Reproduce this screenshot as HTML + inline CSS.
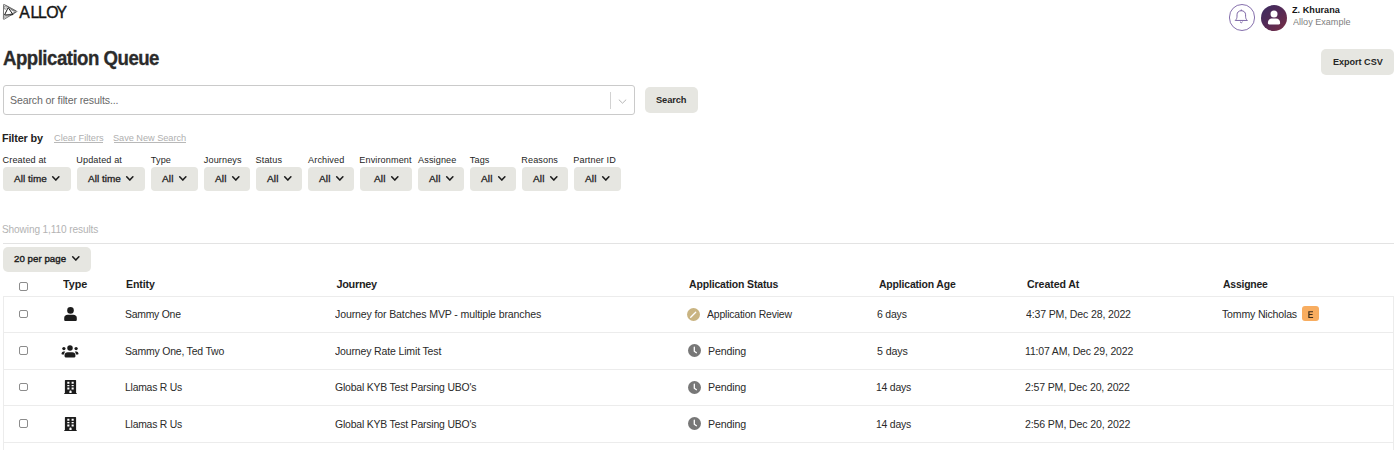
<!DOCTYPE html>
<html><head><meta charset="utf-8">
<style>
html,body{margin:0;padding:0;background:#fff;width:1400px;height:450px;overflow:hidden;}
body{position:relative;font-family:"Liberation Sans",sans-serif;color:#222;}
.a{position:absolute;}
.t{position:absolute;white-space:nowrap;line-height:1;}
.btn{position:absolute;background:#e6e6e1;border-radius:4px;}
.hl{position:absolute;background:#ececec;height:1px;}
.cb{position:absolute;width:7px;height:6.8px;border:1px solid #8c8c8c;border-radius:2px;background:#fff;}
</style></head>
<body>
<svg class="a" style="left:0px;top:0px" width="20" height="22" viewBox="0 0 20 22" fill="none" stroke="#1a1a1a" stroke-linejoin="round">
<path d="M3.6 4.9 Q3.4 4.2 4.2 4.5 L16.6 11.1 Q17.3 11.5 16.6 11.9 L4.2 19.2 Q3.4 19.6 3.4 18.8 Z" stroke-width="0.7" stroke="#3a3a3a"/>
<path d="M4.5 15 L8.2 7.6 L13 14.6 Z" stroke-width="1.0"/>
<path d="M6 5.6 L15.6 11.2 M8.4 7.2 L14.8 12 M10.5 9.5 L16 11.5" stroke-width="0.45" stroke="#444"/>
<path d="M3.8 16.5 L15.2 12.3 M3.8 18 L15.8 12" stroke-width="0.45" stroke="#444"/>
<ellipse cx="5.2" cy="7.6" rx="1.0" ry="1.8" stroke-width="0.55" stroke="#444"/>
</svg><div class="a" style="left:1228.8px;top:4.2px;width:24.4px;height:24.4px;border:1px solid #8670ad;border-radius:50%;"></div>
<svg class="a" style="left:1226px;top:1.4px" width="32" height="32" viewBox="0 0 32 32" fill="none" stroke="#7d66a6" stroke-width="1" stroke-linejoin="round" stroke-linecap="round">
<path d="M9.5 19.2 C10.6 18.3 11 17 11 15.2 V13.8 C11 11.3 12.8 9.7 15.3 9.7 C17.8 9.7 19.6 11.3 19.6 13.8 V15.2 C19.6 17 20 18.3 21.1 19.2 Z"/>
<path d="M15.3 9.7 V8.9"/><path d="M14.3 21 L15.3 21.8 L16.3 21"/>
</svg><div class="a" style="left:1261px;top:4.6px;width:26px;height:26px;border-radius:50%;background:linear-gradient(135deg,#3a2c62 0%,#552a55 50%,#7a2e44 100%);"></div>
<svg class="a" style="left:1261px;top:4.6px" width="26" height="26" viewBox="0 0 26 26" fill="#fff">
<circle cx="13" cy="8.9" r="3.5"/><path d="M6.9 17.7 C6.9 15.2 8.4 13.5 11 13.5 H15 C17.6 13.5 19.1 15.2 19.1 17.7 V18.3 C19.1 19 18.6 19.5 17.9 19.5 H8.1 C7.4 19.5 6.9 19 6.9 18.3 Z"/>
</svg><div class="a" style="left:3px;top:85.3px;width:629.5px;height:27.5px;border:1px solid #cacaca;border-radius:3px;background:#fff;"></div>
<div class="a" style="left:609.5px;top:91.6px;width:1px;height:17.3px;background:#d2d2d2;"></div>
<svg class="a" style="left:617.5px;top:98.5px" width="9" height="5" viewBox="0 0 9 5" fill="none" stroke="#b5b5b5" stroke-width="1"><path d="M0.8 0.6 L4.5 4.2 L8.2 0.6"/></svg>
<div class="btn" style="left:645px;top:87.1px;width:53px;height:25.8px;border-radius:5px;"></div>
<div class="btn" style="left:1321px;top:49px;width:73px;height:26px;border-radius:5px;"></div>
<div class="a" style="left:3px;top:142.3px;width:0;height:0;"></div>
<div class="a" style="left:54.3px;top:142.2px;width:48.8px;height:0.8px;background:#b8b8b8;"></div>
<div class="a" style="left:113.9px;top:142.2px;width:72.1px;height:0.8px;background:#b8b8b8;"></div>
<div class="hl" style="left:3px;top:243px;width:1391px;background:#e3e3e3;"></div>
<div class="btn" style="left:2.8px;top:246.6px;width:88.1px;height:25.3px;border-radius:5px;"></div>
<div class="btn" style="left:3px;top:167px;width:68px;height:23.5px;"></div>
<svg class="a" style="left:52.00px;top:176.20px" width="7.6" height="4.8" viewBox="0 0 7.6 4.8" fill="none" stroke="#1c1c1c" stroke-width="1.55" stroke-linecap="round" stroke-linejoin="round" overflow="visible"><path d="M0.7 0.7 L3.8 4.1 L6.8999999999999995 0.7"/></svg>
<div class="btn" style="left:77px;top:167px;width:68px;height:23.5px;"></div>
<svg class="a" style="left:126.00px;top:176.20px" width="7.6" height="4.8" viewBox="0 0 7.6 4.8" fill="none" stroke="#1c1c1c" stroke-width="1.55" stroke-linecap="round" stroke-linejoin="round" overflow="visible"><path d="M0.7 0.7 L3.8 4.1 L6.8999999999999995 0.7"/></svg>
<div class="btn" style="left:151px;top:167px;width:47px;height:23.5px;"></div>
<svg class="a" style="left:179.30px;top:176.20px" width="7.6" height="4.8" viewBox="0 0 7.6 4.8" fill="none" stroke="#1c1c1c" stroke-width="1.55" stroke-linecap="round" stroke-linejoin="round" overflow="visible"><path d="M0.7 0.7 L3.8 4.1 L6.8999999999999995 0.7"/></svg>
<div class="btn" style="left:204px;top:167px;width:46px;height:23.5px;"></div>
<svg class="a" style="left:231.80px;top:176.20px" width="7.6" height="4.8" viewBox="0 0 7.6 4.8" fill="none" stroke="#1c1c1c" stroke-width="1.55" stroke-linecap="round" stroke-linejoin="round" overflow="visible"><path d="M0.7 0.7 L3.8 4.1 L6.8999999999999995 0.7"/></svg>
<div class="btn" style="left:256px;top:167px;width:46px;height:23.5px;"></div>
<svg class="a" style="left:283.80px;top:176.20px" width="7.6" height="4.8" viewBox="0 0 7.6 4.8" fill="none" stroke="#1c1c1c" stroke-width="1.55" stroke-linecap="round" stroke-linejoin="round" overflow="visible"><path d="M0.7 0.7 L3.8 4.1 L6.8999999999999995 0.7"/></svg>
<div class="btn" style="left:308px;top:167px;width:46px;height:23.5px;"></div>
<svg class="a" style="left:335.80px;top:176.20px" width="7.6" height="4.8" viewBox="0 0 7.6 4.8" fill="none" stroke="#1c1c1c" stroke-width="1.55" stroke-linecap="round" stroke-linejoin="round" overflow="visible"><path d="M0.7 0.7 L3.8 4.1 L6.8999999999999995 0.7"/></svg>
<div class="btn" style="left:360px;top:167px;width:52px;height:23.5px;"></div>
<svg class="a" style="left:390.80px;top:176.20px" width="7.6" height="4.8" viewBox="0 0 7.6 4.8" fill="none" stroke="#1c1c1c" stroke-width="1.55" stroke-linecap="round" stroke-linejoin="round" overflow="visible"><path d="M0.7 0.7 L3.8 4.1 L6.8999999999999995 0.7"/></svg>
<div class="btn" style="left:418px;top:167px;width:46px;height:23.5px;"></div>
<svg class="a" style="left:445.80px;top:176.20px" width="7.6" height="4.8" viewBox="0 0 7.6 4.8" fill="none" stroke="#1c1c1c" stroke-width="1.55" stroke-linecap="round" stroke-linejoin="round" overflow="visible"><path d="M0.7 0.7 L3.8 4.1 L6.8999999999999995 0.7"/></svg>
<div class="btn" style="left:470px;top:167px;width:46px;height:23.5px;"></div>
<svg class="a" style="left:497.80px;top:176.20px" width="7.6" height="4.8" viewBox="0 0 7.6 4.8" fill="none" stroke="#1c1c1c" stroke-width="1.55" stroke-linecap="round" stroke-linejoin="round" overflow="visible"><path d="M0.7 0.7 L3.8 4.1 L6.8999999999999995 0.7"/></svg>
<div class="btn" style="left:522px;top:167px;width:46px;height:23.5px;"></div>
<svg class="a" style="left:549.80px;top:176.20px" width="7.6" height="4.8" viewBox="0 0 7.6 4.8" fill="none" stroke="#1c1c1c" stroke-width="1.55" stroke-linecap="round" stroke-linejoin="round" overflow="visible"><path d="M0.7 0.7 L3.8 4.1 L6.8999999999999995 0.7"/></svg>
<div class="btn" style="left:574px;top:167px;width:47px;height:23.5px;"></div>
<svg class="a" style="left:602.30px;top:176.20px" width="7.6" height="4.8" viewBox="0 0 7.6 4.8" fill="none" stroke="#1c1c1c" stroke-width="1.55" stroke-linecap="round" stroke-linejoin="round" overflow="visible"><path d="M0.7 0.7 L3.8 4.1 L6.8999999999999995 0.7"/></svg>
<svg class="a" style="left:72.20px;top:256.00px" width="7.6" height="4.8" viewBox="0 0 7.6 4.8" fill="none" stroke="#1c1c1c" stroke-width="1.55" stroke-linecap="round" stroke-linejoin="round" overflow="visible"><path d="M0.7 0.7 L3.8 4.1 L6.8999999999999995 0.7"/></svg>
<div class="cb" style="left:19px;top:281.9px;"></div>
<div class="a" style="left:3px;top:296px;width:1389px;height:160px;border-left:1px solid #ececec;border-right:1px solid #ececec;"></div>
<div class="hl" style="left:3px;top:296px;width:1391px;"></div>
<div class="cb" style="left:19px;top:309.6px;"></div>
<svg class="a" style="left:64px;top:306.9px" width="14" height="15" viewBox="0 0 14 15" fill="#1c1c1c"><circle cx="6.5" cy="3.4" r="3.3"/><path d="M0.2 13.1 V10.9 C0.2 9.1 1.6 7.8 3.6 7.8 H9.4 C11.4 7.8 12.8 9.1 12.8 10.9 V13.1 C12.8 13.6 12.4 14 11.8 14 H1.2 C0.6 14 0.2 13.6 0.2 13.1Z"/></svg>
<svg class="a" style="left:687.0px;top:308.0px" width="13" height="13" viewBox="0 0 13 13"><circle cx="6.5" cy="6.5" r="6.5" fill="#c9b482"/><path d="M3.7 9.3 L8.7 4.3" fill="none" stroke="#fff" stroke-width="1.3" stroke-linecap="round"/></svg>
<div class="a" style="left:1302px;top:306.0px;width:17px;height:15.4px;border-radius:3px;background:#f8ad60;"></div>
<div class="hl" style="left:3px;top:332px;width:1391px;"></div>
<div class="cb" style="left:19px;top:346.1px;"></div>
<svg class="a" style="left:61.3px;top:344.8px" width="18" height="13" viewBox="0 0 18 13" fill="#1c1c1c"><circle cx="9" cy="3.0" r="2.75"/><path d="M3.6 11.6 V10.2 C3.6 8.5 4.9 7.3 6.6 7.3 H11.4 C13.1 7.3 14.4 8.5 14.4 10.2 V11.6 C14.4 12.1 14 12.4 13.5 12.4 H4.5 C4 12.4 3.6 12.1 3.6 11.6Z"/><circle cx="2.9" cy="3.6" r="1.65"/><circle cx="15.1" cy="3.6" r="1.65"/><path d="M0.5 8.8 C0.5 7.4 1.4 6.4 2.7 6.4 H4.3 C3.7 7.1 3.2 7.9 3.2 9.0 V9.4 H1.1 C0.7 9.4 0.5 9.2 0.5 8.8Z"/><path d="M17.5 8.8 C17.5 7.4 16.6 6.4 15.3 6.4 H13.7 C14.3 7.1 14.8 7.9 14.8 9.0 V9.4 H16.9 C17.3 9.4 17.5 9.2 17.5 8.8Z"/></svg>
<svg class="a" style="left:688.0px;top:344.0px" width="13" height="13" viewBox="0 0 13 13"><circle cx="6.5" cy="6.5" r="6.5" fill="#777"/><path d="M6.3 3.2 V7.3 L8.4 8.7" fill="none" stroke="#fff" stroke-width="1.3" stroke-linecap="round" stroke-linejoin="round"/></svg>
<div class="hl" style="left:3px;top:369px;width:1391px;"></div>
<div class="cb" style="left:19px;top:382.6px;"></div>
<svg class="a" style="left:64px;top:380.4px" width="13" height="14" viewBox="0 0 13 14" fill="#1c1c1c"><path fill-rule="evenodd" d="M0.9 0.6 C0.9 0.3 1.2 0 1.5 0 H11.5 C11.8 0 12.1 0.3 12.1 0.6 V13 H12.7 V14 H0.3 V13 H0.9 Z M3.3 1.8 H5.4 V3.8 H3.3 Z M7.6 1.8 H9.7 V3.8 H7.6 Z M3.3 4.9 H5.4 V6.3 H3.3 Z M7.6 4.9 H9.7 V6.3 H7.6 Z M3.3 7.4 H5.4 V9.4 H3.3 Z M7.6 7.4 H9.7 V9.4 H7.6 Z M5.4 13 V11.6 C5.4 11 5.9 10.6 6.5 10.6 C7.1 10.6 7.6 11 7.6 11.6 V13 Z"/></svg>
<svg class="a" style="left:688.0px;top:380.5px" width="13" height="13" viewBox="0 0 13 13"><circle cx="6.5" cy="6.5" r="6.5" fill="#777"/><path d="M6.3 3.2 V7.3 L8.4 8.7" fill="none" stroke="#fff" stroke-width="1.3" stroke-linecap="round" stroke-linejoin="round"/></svg>
<div class="hl" style="left:3px;top:405px;width:1391px;"></div>
<div class="cb" style="left:19px;top:419.1px;"></div>
<svg class="a" style="left:64px;top:416.9px" width="13" height="14" viewBox="0 0 13 14" fill="#1c1c1c"><path fill-rule="evenodd" d="M0.9 0.6 C0.9 0.3 1.2 0 1.5 0 H11.5 C11.8 0 12.1 0.3 12.1 0.6 V13 H12.7 V14 H0.3 V13 H0.9 Z M3.3 1.8 H5.4 V3.8 H3.3 Z M7.6 1.8 H9.7 V3.8 H7.6 Z M3.3 4.9 H5.4 V6.3 H3.3 Z M7.6 4.9 H9.7 V6.3 H7.6 Z M3.3 7.4 H5.4 V9.4 H3.3 Z M7.6 7.4 H9.7 V9.4 H7.6 Z M5.4 13 V11.6 C5.4 11 5.9 10.6 6.5 10.6 C7.1 10.6 7.6 11 7.6 11.6 V13 Z"/></svg>
<svg class="a" style="left:688.0px;top:417.0px" width="13" height="13" viewBox="0 0 13 13"><circle cx="6.5" cy="6.5" r="6.5" fill="#777"/><path d="M6.3 3.2 V7.3 L8.4 8.7" fill="none" stroke="#fff" stroke-width="1.3" stroke-linecap="round" stroke-linejoin="round"/></svg>
<div class="hl" style="left:3px;top:442px;width:1391px;"></div>
<div class="t" style="left:19.35px;top:4.65px;font-size:15.8px;font-weight:400;color:#141414;-webkit-text-stroke:0.4px #141414;">A</div>
<div class="t" style="left:30.60px;top:4.65px;font-size:15.8px;font-weight:400;color:#141414;-webkit-text-stroke:0.4px #141414;">L</div>
<div class="t" style="left:38.10px;top:4.65px;font-size:15.8px;font-weight:400;color:#141414;-webkit-text-stroke:0.4px #141414;">L</div>
<div class="t" style="left:46.20px;top:4.65px;font-size:15.8px;font-weight:400;color:#141414;-webkit-text-stroke:0.4px #141414;">O</div>
<div class="t" style="left:56.60px;top:4.65px;font-size:15.8px;font-weight:400;color:#141414;-webkit-text-stroke:0.4px #141414;">Y</div>
<div class="t" style="left:1292.25px;top:6.00px;font-size:9px;font-weight:700;color:#151515;letter-spacing:0.037px;transform:scaleX(1.0109);transform-origin:0 0;">Z. Khurana</div>
<div class="t" style="left:1292.50px;top:17.79px;font-size:9px;font-weight:400;color:#7e7e7e;letter-spacing:0.015px;transform:scaleX(1.0048);transform-origin:0 0;">Alloy Example</div>
<div class="t" style="left:2.73px;top:48.10px;font-size:20px;font-weight:700;color:#2b2b2b;letter-spacing:-0.541px;transform:scaleX(0.9312);transform-origin:0 0;-webkit-text-stroke:0.3px #2b2b2b;">Application Queue</div>
<div class="t" style="left:1332.50px;top:57.53px;font-size:9.2px;font-weight:700;color:#262626;letter-spacing:-0.036px;transform:scaleX(0.9904);transform-origin:0 0;">Export CSV</div>
<div class="t" style="left:9.62px;top:94.80px;font-size:11px;font-weight:400;color:#686868;letter-spacing:-0.121px;transform:scaleX(0.9605);transform-origin:0 0;">Search or filter results...</div>
<div class="t" style="left:656.46px;top:94.89px;font-size:9.6px;font-weight:700;color:#262626;letter-spacing:-0.128px;transform:scaleX(0.9702);transform-origin:0 0;">Search</div>
<div class="t" style="left:2.28px;top:132.57px;font-size:11.4px;font-weight:700;color:#222;letter-spacing:-0.173px;transform:scaleX(0.9545);transform-origin:0 0;">Filter by</div>
<div class="t" style="left:53.81px;top:132.96px;font-size:9.4px;font-weight:400;color:#b0b0b0;letter-spacing:-0.032px;transform:scaleX(0.9885);transform-origin:0 0;">Clear Filters</div>
<div class="t" style="left:113.41px;top:132.96px;font-size:9.4px;font-weight:400;color:#b0b0b0;letter-spacing:-0.055px;transform:scaleX(0.9846);transform-origin:0 0;">Save New Search</div>
<div class="t" style="left:2.32px;top:224.33px;font-size:10.5px;font-weight:400;color:#b3b3b3;letter-spacing:-0.130px;transform:scaleX(0.9631);transform-origin:0 0;">Showing 1,110 results</div>
<div class="t" style="left:14.15px;top:254.29px;font-size:9.6px;font-weight:400;color:#1e1e1e;letter-spacing:0.034px;transform:scaleX(1.0100);transform-origin:0 0;-webkit-text-stroke:0.4px #1e1e1e;">20 per page</div>
<div class="t" style="left:2.55px;top:155.91px;font-size:9.1px;font-weight:400;color:#1e1e1e;letter-spacing:0.12px;">Created at</div>
<div class="t" style="left:14.00px;top:173.52px;font-size:9.8px;font-weight:400;color:#222;letter-spacing:0.042px;transform:scaleX(1.0142);transform-origin:0 0;-webkit-text-stroke:0.3px #222;">All time</div>
<div class="t" style="left:76.30px;top:155.91px;font-size:9.1px;font-weight:400;color:#1e1e1e;letter-spacing:0.12px;">Updated at</div>
<div class="t" style="left:88.00px;top:173.52px;font-size:9.8px;font-weight:400;color:#222;letter-spacing:0.042px;transform:scaleX(1.0142);transform-origin:0 0;-webkit-text-stroke:0.3px #222;">All time</div>
<div class="t" style="left:150.80px;top:155.91px;font-size:9.1px;font-weight:400;color:#1e1e1e;letter-spacing:0.12px;">Type</div>
<div class="t" style="left:162.00px;top:173.52px;font-size:9.8px;font-weight:400;color:#222;letter-spacing:0.097px;transform:scaleX(1.0286);transform-origin:0 0;-webkit-text-stroke:0.3px #222;">All</div>
<div class="t" style="left:203.80px;top:155.91px;font-size:9.1px;font-weight:400;color:#1e1e1e;letter-spacing:0.12px;">Journeys</div>
<div class="t" style="left:214.50px;top:173.52px;font-size:9.8px;font-weight:400;color:#222;letter-spacing:0.097px;transform:scaleX(1.0286);transform-origin:0 0;-webkit-text-stroke:0.3px #222;">All</div>
<div class="t" style="left:255.55px;top:155.91px;font-size:9.1px;font-weight:400;color:#1e1e1e;letter-spacing:0.12px;">Status</div>
<div class="t" style="left:266.50px;top:173.52px;font-size:9.8px;font-weight:400;color:#222;letter-spacing:0.097px;transform:scaleX(1.0286);transform-origin:0 0;-webkit-text-stroke:0.3px #222;">All</div>
<div class="t" style="left:308.05px;top:155.91px;font-size:9.1px;font-weight:400;color:#1e1e1e;letter-spacing:0.12px;">Archived</div>
<div class="t" style="left:318.50px;top:173.52px;font-size:9.8px;font-weight:400;color:#222;letter-spacing:0.097px;transform:scaleX(1.0286);transform-origin:0 0;-webkit-text-stroke:0.3px #222;">All</div>
<div class="t" style="left:359.30px;top:155.91px;font-size:9.1px;font-weight:400;color:#1e1e1e;letter-spacing:0.12px;">Environment</div>
<div class="t" style="left:373.50px;top:173.52px;font-size:9.8px;font-weight:400;color:#222;letter-spacing:0.097px;transform:scaleX(1.0286);transform-origin:0 0;-webkit-text-stroke:0.3px #222;">All</div>
<div class="t" style="left:418.05px;top:155.91px;font-size:9.1px;font-weight:400;color:#1e1e1e;letter-spacing:0.12px;">Assignee</div>
<div class="t" style="left:428.50px;top:173.52px;font-size:9.8px;font-weight:400;color:#222;letter-spacing:0.097px;transform:scaleX(1.0286);transform-origin:0 0;-webkit-text-stroke:0.3px #222;">All</div>
<div class="t" style="left:469.80px;top:155.91px;font-size:9.1px;font-weight:400;color:#1e1e1e;letter-spacing:0.12px;">Tags</div>
<div class="t" style="left:480.50px;top:173.52px;font-size:9.8px;font-weight:400;color:#222;letter-spacing:0.097px;transform:scaleX(1.0286);transform-origin:0 0;-webkit-text-stroke:0.3px #222;">All</div>
<div class="t" style="left:521.30px;top:155.91px;font-size:9.1px;font-weight:400;color:#1e1e1e;letter-spacing:0.12px;">Reasons</div>
<div class="t" style="left:532.50px;top:173.52px;font-size:9.8px;font-weight:400;color:#222;letter-spacing:0.097px;transform:scaleX(1.0286);transform-origin:0 0;-webkit-text-stroke:0.3px #222;">All</div>
<div class="t" style="left:573.30px;top:155.91px;font-size:9.1px;font-weight:400;color:#1e1e1e;letter-spacing:0.12px;">Partner ID</div>
<div class="t" style="left:585.00px;top:173.52px;font-size:9.8px;font-weight:400;color:#222;letter-spacing:0.097px;transform:scaleX(1.0286);transform-origin:0 0;-webkit-text-stroke:0.3px #222;">All</div>
<div class="t" style="left:63.10px;top:278.99px;font-size:10.9px;font-weight:700;color:#1e1e1e;letter-spacing:-0.034px;transform:scaleX(0.9938);transform-origin:0 0;">Type</div>
<div class="t" style="left:126.47px;top:278.99px;font-size:10.9px;font-weight:700;color:#1e1e1e;letter-spacing:-0.115px;transform:scaleX(0.9715);transform-origin:0 0;">Entity</div>
<div class="t" style="left:336.50px;top:278.99px;font-size:10.9px;font-weight:700;color:#1e1e1e;letter-spacing:-0.3px;">Journey</div>
<div class="t" style="left:688.51px;top:278.99px;font-size:10.9px;font-weight:700;color:#1e1e1e;letter-spacing:-0.153px;transform:scaleX(0.9605);transform-origin:0 0;">Application Status</div>
<div class="t" style="left:878.51px;top:278.99px;font-size:10.9px;font-weight:700;color:#1e1e1e;letter-spacing:-0.172px;transform:scaleX(0.9579);transform-origin:0 0;">Application Age</div>
<div class="t" style="left:1026.51px;top:278.99px;font-size:10.9px;font-weight:700;color:#1e1e1e;letter-spacing:-0.103px;transform:scaleX(0.9750);transform-origin:0 0;">Created At</div>
<div class="t" style="left:1223.01px;top:278.99px;font-size:10.9px;font-weight:700;color:#1e1e1e;letter-spacing:-0.209px;transform:scaleX(0.9560);transform-origin:0 0;">Assignee</div>
<div class="t" style="left:125.43px;top:309.10px;font-size:11px;font-weight:400;color:#2a2a2a;letter-spacing:-0.271px;transform:scaleX(0.9487);transform-origin:0 0;">Sammy One</div>
<div class="t" style="left:335.06px;top:309.10px;font-size:11px;font-weight:400;color:#2a2a2a;letter-spacing:-0.142px;transform:scaleX(0.9610);transform-origin:0 0;">Journey for Batches MVP - multiple branches</div>
<div class="t" style="left:707.00px;top:309.10px;font-size:11px;font-weight:400;color:#2a2a2a;letter-spacing:-0.198px;transform:scaleX(0.9484);transform-origin:0 0;">Application Review</div>
<div class="t" style="left:876.52px;top:309.10px;font-size:11px;font-weight:400;color:#2a2a2a;letter-spacing:-0.210px;transform:scaleX(0.9524);transform-origin:0 0;">6 days</div>
<div class="t" style="left:1025.51px;top:309.10px;font-size:11px;font-weight:400;color:#2a2a2a;letter-spacing:-0.156px;transform:scaleX(0.9597);transform-origin:0 0;">4:37 PM, Dec 28, 2022</div>
<div class="t" style="left:1221.76px;top:309.10px;font-size:11px;font-weight:400;color:#2a2a2a;letter-spacing:-0.177px;transform:scaleX(0.9587);transform-origin:0 0;">Tommy Nicholas</div>
<div class="t" style="left:125.42px;top:345.60px;font-size:11px;font-weight:400;color:#2a2a2a;letter-spacing:-0.211px;transform:scaleX(0.9519);transform-origin:0 0;">Sammy One, Ted Two</div>
<div class="t" style="left:335.06px;top:345.60px;font-size:11px;font-weight:400;color:#2a2a2a;letter-spacing:-0.160px;transform:scaleX(0.9560);transform-origin:0 0;">Journey Rate Limit Test</div>
<div class="t" style="left:708.23px;top:345.60px;font-size:11px;font-weight:400;color:#2a2a2a;letter-spacing:-0.148px;transform:scaleX(0.9667);transform-origin:0 0;">Pending</div>
<div class="t" style="left:876.52px;top:345.60px;font-size:11px;font-weight:400;color:#2a2a2a;letter-spacing:-0.132px;transform:scaleX(0.9695);transform-origin:0 0;">5 days</div>
<div class="t" style="left:1025.03px;top:345.60px;font-size:11px;font-weight:400;color:#2a2a2a;letter-spacing:-0.177px;transform:scaleX(0.9542);transform-origin:0 0;">11:07 AM, Dec 29, 2022</div>
<div class="t" style="left:124.96px;top:382.10px;font-size:11px;font-weight:400;color:#2a2a2a;letter-spacing:-0.241px;transform:scaleX(0.9444);transform-origin:0 0;">Llamas R Us</div>
<div class="t" style="left:334.83px;top:382.10px;font-size:11px;font-weight:400;color:#2a2a2a;letter-spacing:-0.199px;transform:scaleX(0.9486);transform-origin:0 0;">Global KYB Test Parsing UBO's</div>
<div class="t" style="left:708.23px;top:382.10px;font-size:11px;font-weight:400;color:#2a2a2a;letter-spacing:-0.148px;transform:scaleX(0.9667);transform-origin:0 0;">Pending</div>
<div class="t" style="left:876.29px;top:382.10px;font-size:11px;font-weight:400;color:#2a2a2a;letter-spacing:-0.225px;transform:scaleX(0.9488);transform-origin:0 0;">14 days</div>
<div class="t" style="left:1025.27px;top:382.10px;font-size:11px;font-weight:400;color:#2a2a2a;letter-spacing:-0.157px;transform:scaleX(0.9594);transform-origin:0 0;">2:57 PM, Dec 20, 2022</div>
<div class="t" style="left:124.96px;top:418.60px;font-size:11px;font-weight:400;color:#2a2a2a;letter-spacing:-0.241px;transform:scaleX(0.9444);transform-origin:0 0;">Llamas R Us</div>
<div class="t" style="left:334.83px;top:418.60px;font-size:11px;font-weight:400;color:#2a2a2a;letter-spacing:-0.199px;transform:scaleX(0.9486);transform-origin:0 0;">Global KYB Test Parsing UBO's</div>
<div class="t" style="left:708.23px;top:418.60px;font-size:11px;font-weight:400;color:#2a2a2a;letter-spacing:-0.148px;transform:scaleX(0.9667);transform-origin:0 0;">Pending</div>
<div class="t" style="left:876.29px;top:418.60px;font-size:11px;font-weight:400;color:#2a2a2a;letter-spacing:-0.225px;transform:scaleX(0.9488);transform-origin:0 0;">14 days</div>
<div class="t" style="left:1025.27px;top:418.60px;font-size:11px;font-weight:400;color:#2a2a2a;letter-spacing:-0.147px;transform:scaleX(0.9621);transform-origin:0 0;">2:56 PM, Dec 20, 2022</div>
<svg class="a" style="left:1307px;top:310px" width="8" height="10" viewBox="0 0 8 10" fill="#3b2c1c"><path d="M1.3 1.2 H6 V2.25 H2.5 V4.1 H5.6 V5.1 H2.5 V6.95 H6.1 V8.0 H1.3 Z"/></svg>
</body></html>
